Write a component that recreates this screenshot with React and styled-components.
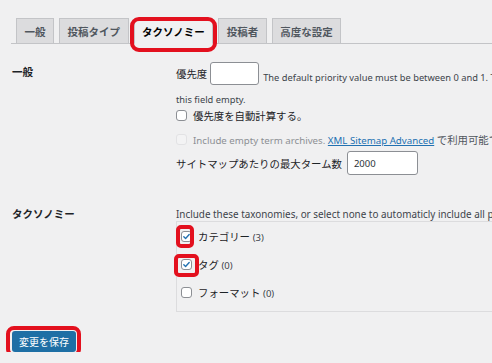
import React from 'react'
import styled, { createGlobalStyle } from 'styled-components'

const GlobalStyle = createGlobalStyle`
  html, body {
    margin: 0;
    overflow: hidden;
    background: #f0f0f1;
  }
  body {
    font-family: "Noto Sans", "Noto Sans CJK JP", sans-serif;
    color: #1d2327;
  }
`

const tabs = ['一般', '投稿タイプ', 'タクソノミー', '投稿者', '高度な設定']

const taxonomies = [
  { name: 'カテゴリー', count: 3, checked: true, mark: '-5.5px -2px -6.5px -5px' },
  { name: 'タグ', count: 0, checked: true, mark: '-5px -7px -7px -7px' },
  { name: 'フォーマット', count: 0, checked: false },
]

function Check({ checked, disabled }) {
  return (
    <Box $disabled={disabled}>
      {checked && (
        <svg width="9" height="9" viewBox="0 0 20 20">
          <path d="M4 10.5l4 4 8-9" fill="none" stroke="#2271b1" strokeWidth="3" strokeLinecap="round" strokeLinejoin="round" />
        </svg>
      )}
    </Box>
  )
}

export default function App() {
  return (
    <Page>
      <GlobalStyle />
      <TabBar>
        {tabs.map((t) => (
          <Tab key={t} $active={t === 'タクソノミー'}>
            {t}
          </Tab>
        ))}
      </TabBar>

      <Section $top="18px">
        <Th $line="20px">一般</Th>
        <Td>
          <Row $h="23px">
            <Label>優先度</Label>
            <Input $w="49px" $gap="-3px" />
            <Desc>The default priority value must be between 0 and 1. The value is calculated automatically if you leave</Desc>
          </Row>
          <Note>this field empty.</Note>
          <Row $h="16px" $top="0px">
            <Check />
            <Label>優先度を自動計算する。</Label>
          </Row>
          <Row $h="16px" $top="8px">
            <Check disabled />
            <Muted>
              Include empty term archives. <a href="#">XML Sitemap Advanced</a> <span>で利用可能です。</span>
            </Muted>
          </Row>
          <Row $h="24px" $top="4px">
            <Label>サイトマップあたりの最大ターム数</Label>
            <Input $w="71px" $gap="-1px">2000</Input>
          </Row>
        </Td>
      </Section>

      <Section $top="32px">
        <Th $line="14px">タクソノミー</Th>
        <Td>
          <Note $top="0px" $size="9.9px">Include these taxonomies, or select none to automaticly include all post taxonomies.</Note>
          <ListBox>
            {taxonomies.map((t) => (
              <ListRow key={t.name}>
                {t.mark ? (
                  <Mark $inset={t.mark} $radius="5px">
                    <Check checked={t.checked} />
                  </Mark>
                ) : (
                  <Check checked={t.checked} />
                )}
                <Label>
                  {t.name} <small>({t.count})</small>
                </Label>
              </ListRow>
            ))}
          </ListBox>
        </Td>
      </Section>

      <Footer>
        <Mark $inset="-5px -5px -5px -6px" $radius="8px">
          <SaveButton>変更を保存</SaveButton>
        </Mark>
      </Footer>
    </Page>
  )
}

const Page = styled.div`
  width: 760px;
  padding-left: 11px;
`

const TabBar = styled.div`
  display: flex;
  align-items: flex-end;
  padding: 18px 0 0 5px;
  border-bottom: 1px solid #c3c4c7;
`

const Tab = styled.div`
  position: relative;
  box-sizing: border-box;
  height: 26px;
  margin-left: 5px;
  margin-bottom: -1px;
  padding: 0 7.5px;
  display: flex;
  align-items: center;
  font-size: 10.5px;
  font-weight: 700;
  color: ${(p) => (p.$active ? '#000' : '#50575e')};
  background: ${(p) => (p.$active ? '#f0f0f1' : '#dcdcde')};
  border: 1px solid #c3c4c7;
  border-bottom-color: ${(p) => (p.$active ? '#f0f0f1' : '#c3c4c7')};
  &:first-child {
    margin-left: 0;
  }
  ${(p) =>
    p.$active &&
    `
    &::after {
      content: '';
      position: absolute;
      inset: -2px -5px -9px -5px;
      border: 4px solid #e3101e;
      border-radius: 9px;
    }
  `}
`

const Section = styled.div`
  display: flex;
  margin-top: ${(p) => p.$top};
`

const Th = styled.div`
  flex: none;
  width: 164px;
  padding-left: 1px;
  font-size: 10.5px;
  font-weight: 700;
  line-height: ${(p) => p.$line};
`

const Td = styled.div`
  flex: 1;
  display: flex;
  flex-direction: column;
`

const Row = styled.div`
  display: flex;
  align-items: center;
  gap: 6px;
  height: ${(p) => p.$h};
  margin-top: ${(p) => p.$top || '0px'};
  white-space: nowrap;
`

const Label = styled.span`
  font-size: 10.4px;
  color: #1d2327;
  small {
    font-size: 9.5px;
    color: #3c434a;
  }
`

const Input = styled.span`
  box-sizing: border-box;
  width: ${(p) => p.$w};
  height: 100%;
  margin-left: ${(p) => p.$gap};
  padding-left: 6px;
  display: flex;
  align-items: center;
  background: #fff;
  border: 1px solid #8c8f94;
  border-radius: 3px;
  font-size: 9.5px;
  color: #2c3338;
`

const Desc = styled.span`
  align-self: flex-end;
  margin-left: -2px;
  padding-bottom: 1px;
  font-size: 9.3px;
  color: #3c434a;
`

const Note = styled.div`
  margin-top: ${(p) => p.$top || '8px'};
  font-size: ${(p) => p.$size || '9.3px'};
  line-height: 14px;
  color: #3c434a;
  white-space: nowrap;
`

const Muted = styled.span`
  font-size: 9.7px;
  color: #8c8f94;
  a {
    color: #2271b1;
  }
  span {
    font-size: 10.4px;
    color: #50575e;
  }
`

const Box = styled.span`
  flex: none;
  box-sizing: border-box;
  width: 11px;
  height: 11px;
  display: flex;
  align-items: center;
  justify-content: center;
  background: ${(p) => (p.$disabled ? '#f3f3f4' : '#fff')};
  border: 1px solid ${(p) => (p.$disabled ? '#e2e2e4' : '#8c8f94')};
  border-radius: 3px;
`

const Mark = styled.span`
  position: relative;
  display: inline-flex;
  &::after {
    content: '';
    position: absolute;
    inset: ${(p) => p.$inset};
    border: 4px solid #e3101e;
    border-radius: ${(p) => p.$radius};
  }
`

const ListBox = styled.div`
  border: 1px solid #dcdcde;
  border-right: none;
  padding: 0 0 5px 4px;
`

const ListRow = styled.div`
  display: flex;
  align-items: center;
  gap: 6px;
  height: 28px;
`

const Footer = styled.div`
  margin-top: 17px;
  padding-left: 1px;
`

const SaveButton = styled.button`
  height: 21px;
  width: 64px;
  padding: 0;
  border: none;
  border-radius: 3px;
  background: #1e6fa5;
  color: #fff;
  font-family: inherit;
  font-size: 10px;
`
